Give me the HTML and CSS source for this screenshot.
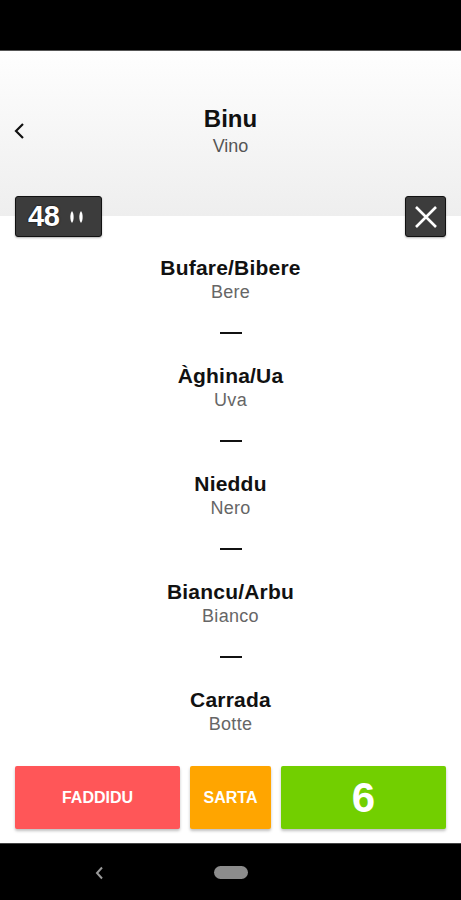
FILE: index.html
```html
<!DOCTYPE html>
<html lang="it">
<head>
    <meta charset="UTF-8">
    <meta name="viewport" content="width=device-width, initial-scale=1.0">
    <title>Binu</title>
    <link rel="stylesheet" href="styles.css">
</head>
<body>
    <div class="screen">
        <div class="status-bar"></div>

        <div class="header">
            <div class="back">
                <svg width="12" height="18" viewBox="0 0 12 18">
                    <path d="M9 2 L2 9 L9 16" fill="none" stroke="#111" stroke-width="2.2"/>
                </svg>
            </div>
            <div class="title-block">
                <div class="title">Binu</div>
                <div class="subtitle">Vino</div>
            </div>
            <div class="back"></div>
        </div>

        <div class="toolbar">
            <div class="timer">
                <span class="timer-count">48</span>
                <svg width="16" height="14" viewBox="0 0 16 14">
                    <path d="M3 1 C5.2 3.5 5.2 10.5 3 13 C0.8 10.5 0.8 3.5 3 1 Z" fill="#fff"/>
                    <path d="M12 1 C14.2 3.5 14.2 10.5 12 13 C9.8 10.5 9.8 3.5 12 1 Z" fill="#fff"/>
                </svg>
            </div>
            <div class="close">
                <svg width="24" height="22" viewBox="0 0 24 22">
                    <path d="M2 1 L22 21 M22 1 L2 21" stroke="#fff" stroke-width="2.6"/>
                </svg>
            </div>
        </div>

        <div class="words">
            <div class="word">
                <div class="word-title">Bufare/Bibere</div>
                <div class="word-sub">Bere</div>
            </div>
            <div class="divider"></div>
            <div class="word">
                <div class="word-title">Àghina/Ua</div>
                <div class="word-sub">Uva</div>
            </div>
            <div class="divider"></div>
            <div class="word">
                <div class="word-title">Nieddu</div>
                <div class="word-sub">Nero</div>
            </div>
            <div class="divider"></div>
            <div class="word">
                <div class="word-title">Biancu/Arbu</div>
                <div class="word-sub">Bianco</div>
            </div>
            <div class="divider"></div>
            <div class="word">
                <div class="word-title">Carrada</div>
                <div class="word-sub">Botte</div>
            </div>
        </div>

        <div class="actions">
            <button class="btn btn-wrong">FADDIDU</button>
            <button class="btn btn-skip">SARTA</button>
            <button class="btn btn-score">6</button>
        </div>

        <div class="nav-bar">
            <svg class="nav-back" width="10" height="14" viewBox="0 0 10 14">
                <path d="M7 1.5 L2 7 L7 12.5" fill="none" stroke="#9a9a9a" stroke-width="2"/>
            </svg>
            <div class="nav-home"></div>
        </div>
    </div>
</body>
</html>
```

FILE: styles.css
```css
* {
    box-sizing: border-box;
}

body {
    margin: 0;
    font-family: "Liberation Sans", Arial, sans-serif;
    background: #ffffff;
    color: #111111;
}

.screen {
    width: 461px;
    height: 900px;
    display: flex;
    flex-direction: column;
    overflow: hidden;
}

.status-bar {
    height: 51px;
    background: #000000;
    border-bottom: 1px solid #555555;
    flex-shrink: 0;
}

.header {
    height: 165px;
    flex-shrink: 0;
    background: linear-gradient(180deg, #fefefe 0%, #f6f6f6 50%, #eeeeee 100%);
    display: flex;
    align-items: center;
    padding-bottom: 6px;
}

.back {
    width: 60px;
    padding-left: 14px;
    display: flex;
    align-items: center;
}

.title-block {
    flex: 1;
    text-align: center;
}

.title {
    font-size: 24px;
    font-weight: bold;
    line-height: 30px;
}

.subtitle {
    font-size: 18px;
    line-height: 24px;
    color: #555555;
}

.toolbar {
    margin-top: -20px;
    padding: 0 15px;
    display: flex;
    justify-content: space-between;
    flex-shrink: 0;
}

.timer {
    width: 87px;
    height: 41px;
    background: #3c3c3c;
    border: 1px solid #111111;
    border-radius: 3px;
    display: flex;
    align-items: center;
    gap: 10px;
    padding-left: 12px;
    box-shadow: 0 1px 2px rgba(0, 0, 0, 0.3);
}

.timer-count {
    color: #ffffff;
    font-size: 29px;
    font-weight: bold;
    letter-spacing: -0.5px;
    text-shadow: 0 0 2px #000000;
}

.close {
    width: 41px;
    height: 41px;
    background: #3c3c3c;
    border: 1px solid #111111;
    border-radius: 3px;
    display: flex;
    align-items: center;
    justify-content: center;
    box-shadow: 0 1px 2px rgba(0, 0, 0, 0.3);
}

.words {
    flex: 1;
    margin-top: 19px;
    overflow: hidden;
    display: flex;
    flex-direction: column;
    align-items: center;
}

.word {
    text-align: center;
}

.word-title {
    font-size: 21px;
    font-weight: bold;
    line-height: 24px;
    letter-spacing: 0.2px;
}

.word-sub {
    font-size: 18px;
    line-height: 24px;
    color: #666666;
    letter-spacing: 0.3px;
}

.divider {
    width: 22px;
    height: 2px;
    background: #111111;
    margin: 28px 0 30px;
    flex-shrink: 0;
}

.actions {
    display: flex;
    gap: 10px;
    padding: 0 15px;
    margin-bottom: 14px;
    flex-shrink: 0;
}

.btn {
    height: 63px;
    border: none;
    border-radius: 2px;
    color: #ffffff;
    font-family: "Liberation Sans", Arial, sans-serif;
    font-weight: bold;
    font-size: 16px;
    box-shadow: 0 2px 3px rgba(0, 0, 0, 0.25);
}

.btn-wrong {
    width: 165px;
    background: #ff5658;
}

.btn-skip {
    width: 81px;
    background: #ffa500;
}

.btn-score {
    flex: 1;
    background: #72cf00;
    font-size: 42px;
}

.nav-bar {
    height: 57px;
    background: #000000;
    border-top: 1px solid #444444;
    flex-shrink: 0;
    position: relative;
}

.nav-back {
    position: absolute;
    left: 95px;
    top: 22px;
}

.nav-home {
    position: absolute;
    left: 214px;
    top: 22px;
    width: 34px;
    height: 13px;
    border-radius: 7px;
    background: #8c8c8c;
}
```
